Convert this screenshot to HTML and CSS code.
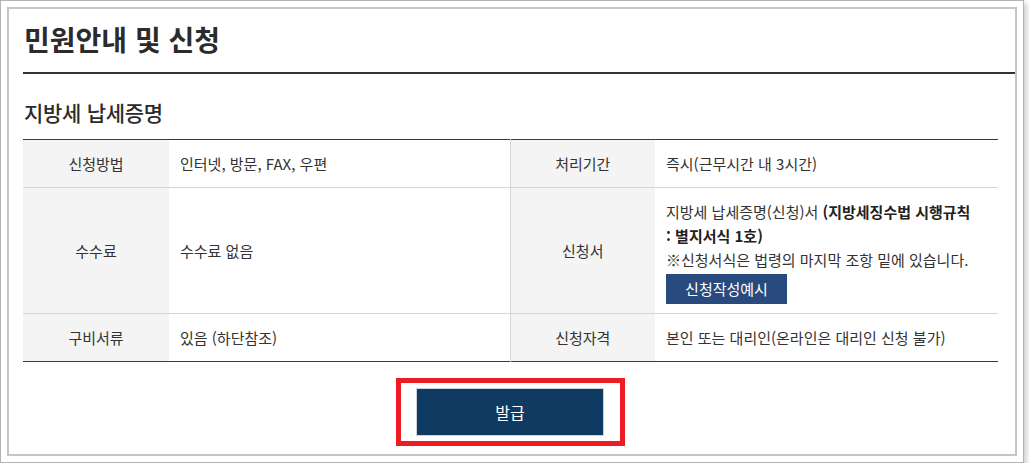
FILE: index.html
```html
<!DOCTYPE html>
<html lang="ko">
<head>
<meta charset="utf-8">
<title>민원안내 및 신청</title>
<link rel="stylesheet" href="styles.css">
</head>
<body>
<div class="frame">
  <div class="panel">
    <h2 class="title">민원안내 및 신청</h2>
    <h3 class="subtitle">지방세 납세증명</h3>
    <table class="info">
      <colgroup>
        <col class="c-head1"><col class="c-data1"><col class="c-head2"><col class="c-data2">
      </colgroup>
      <tbody>
        <tr>
          <th>신청방법</th>
          <td>인터넷, 방문, FAX, 우편</td>
          <th class="sep">처리기간</th>
          <td>즉시(근무시간 내 3시간)</td>
        </tr>
        <tr class="tall">
          <th>수수료</th>
          <td>수수료 없음</td>
          <th class="sep">신청서</th>
          <td class="form-cell">
            <div class="lines">지방세 납세증명(신청)서 <strong>(지방세징수법 시행규칙<br>: 별지서식 1호)</strong><br>※신청서식은 법령의 마지막 조항 밑에 있습니다.</div>
            <a class="example-btn" href="#">신청작성예시</a>
          </td>
        </tr>
        <tr>
          <th>구비서류</th>
          <td>있음 (하단참조)</td>
          <th class="sep">신청자격</th>
          <td>본인 또는 대리인(온라인은 대리인 신청 불가)</td>
        </tr>
      </tbody>
    </table>
    <div class="actions">
      <div class="highlight">
        <button class="issue-btn" type="button">발급</button>
      </div>
    </div>
  </div>
</div>
</body>
</html>
```

FILE: styles.css
```css
* { box-sizing: border-box; }

html, body {
  margin: 0;
  padding: 0;
  background: #ffffff;
}

body {
  font-family: "Noto Sans CJK KR", "Noto Sans", sans-serif;
  color: #333333;
}

.frame {
  width: 1024px;
  height: 463px;
  border: 1px solid #b4b4b4;
  padding: 6px;
  background: #ffffff;
  box-shadow: 3px 3px 5px rgba(0, 0, 0, 0.18);
}

.panel {
  height: 100%;
  border: 2px solid #c6c6c6;
  padding: 0 0 0 14px;
}

.title {
  margin: 0;
  padding: 12px 0 15px 1px;
  font-size: 28px;
  line-height: 36px;
  font-weight: 700;
  color: #2b2b2b;
  letter-spacing: 0;
  border-bottom: 2px solid #333333;
}

.subtitle {
  margin: 23px 0 12px 0;
  padding-left: 1px;
  font-size: 21px;
  line-height: 30px;
  font-weight: 500;
  color: #2b2b2b;
  letter-spacing: -0.3px;
}

.info {
  width: 975px;
  border-collapse: collapse;
  border-top: 1px solid #3a3a3a;
  border-bottom: 1px solid #3a3a3a;
  font-size: 15px;
  letter-spacing: 0;
  color: #333333;
}

.c-head1 { width: 146px; }
.c-data1 { width: 341px; }
.c-head2 { width: 145px; }
.c-data2 { width: 343px; }

.info th,
.info td {
  padding: 12px 11px;
  line-height: 23px;
  border-top: 1px solid #d6d6d6;
  vertical-align: middle;
}

.info tr:first-child th,
.info tr:first-child td {
  border-top: none;
}

.info th {
  background: #f4f4f4;
  font-weight: 400;
  text-align: center;
}

.info th.sep {
  border-left: 1px solid #d6d6d6;
}

.info td {
  text-align: left;
}

.info .form-cell {
  padding: 12px 11px 9px 11px;
}

.lines {
  line-height: 24px;
  white-space: nowrap;
}

.lines strong {
  font-weight: 700;
  color: #222222;
}

.example-btn {
  display: inline-block;
  margin-top: 2px;
  width: 121px;
  height: 30px;
  line-height: 30px;
  text-align: center;
  background: #284a7c;
  color: #ffffff;
  text-decoration: none;
  font-size: 15px;
}

.actions {
  width: 975px;
  display: flex;
  justify-content: center;
  margin-top: 16px;
}

.highlight {
  border: 5px solid #ec1c24;
  padding: 5px 16px 5px 15px;
}

.issue-btn {
  display: block;
  width: 188px;
  height: 48px;
  background: #0f3b63;
  border: 1px solid #cfd3d8;
  color: #ffffff;
  font-family: "Noto Sans CJK KR", "Noto Sans", sans-serif;
  font-size: 16px;
  cursor: pointer;
}
```
